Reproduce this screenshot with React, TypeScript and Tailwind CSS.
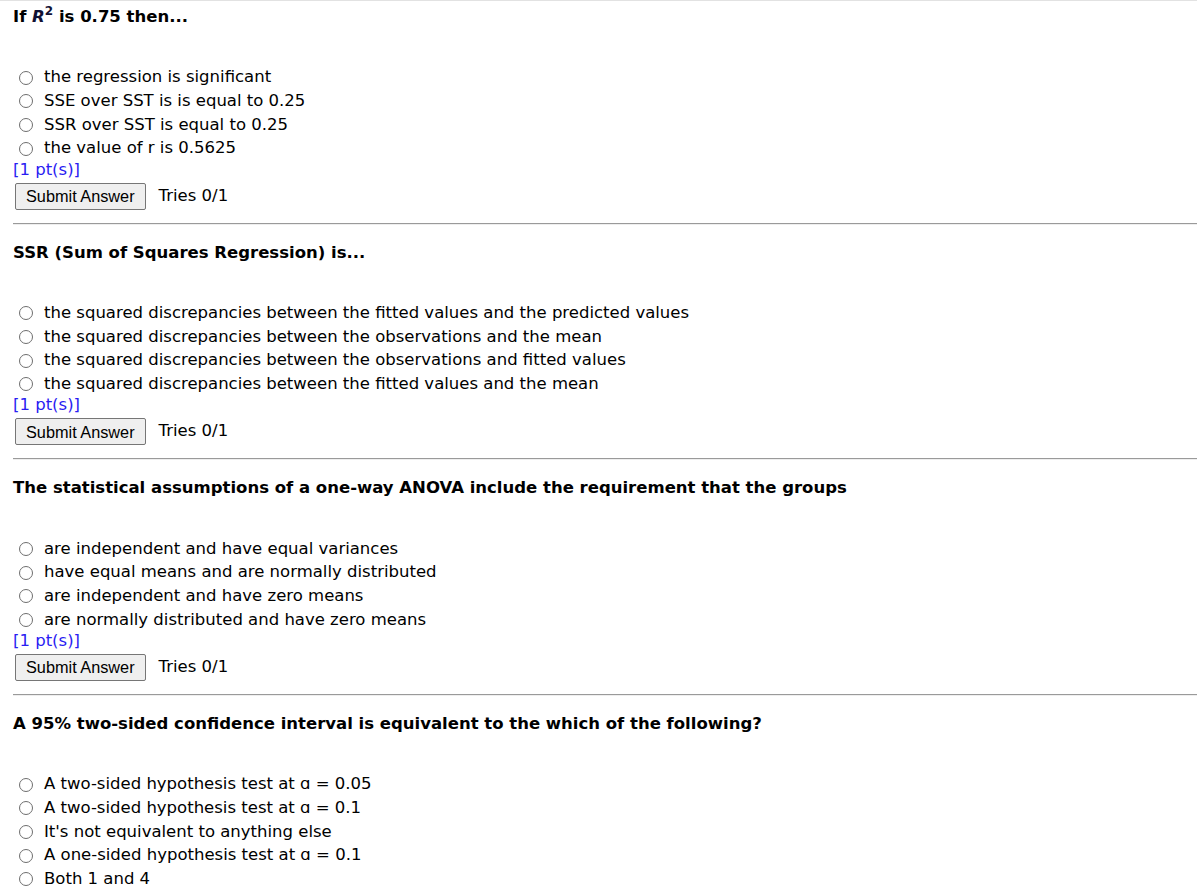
import React from "react";

type Question = {
  title: React.ReactNode;
  options: string[];
};

const questions: Question[] = [
  {
    title: (
      <>
        If{" "}
        <span className="italic text-[#111133]">
          R<sup className="not-italic text-[12px] -top-[7px]">2</sup>
        </span>{" "}
        is 0.75 then...
      </>
    ),
    options: [
      "the regression is significant",
      "SSE over SST is is equal to 0.25",
      "SSR over SST is equal to 0.25",
      "the value of r is 0.5625",
    ],
  },
  {
    title: "SSR (Sum of Squares Regression) is...",
    options: [
      "the squared discrepancies between the fitted values and the predicted values",
      "the squared discrepancies between the observations and the mean",
      "the squared discrepancies between the observations and fitted values",
      "the squared discrepancies between the fitted values and the mean",
    ],
  },
  {
    title:
      "The statistical assumptions of a one-way ANOVA include the requirement that the groups",
    options: [
      "are independent and have equal variances",
      "have equal means and are normally distributed",
      "are independent and have zero means",
      "are normally distributed and have zero means",
    ],
  },
  {
    title:
      "A 95% two-sided confidence interval is equivalent to the which of the following?",
    options: [
      "A two-sided hypothesis test at ɑ = 0.05",
      "A two-sided hypothesis test at ɑ = 0.1",
      "It's not equivalent to anything else",
      "A one-sided hypothesis test at ɑ = 0.1",
      "Both 1 and 4",
    ],
  },
];

function Radio() {
  return (
    <span className="ml-[6px] mr-[11px] inline-block w-[14px] h-[14px] shrink-0 rounded-full border border-[#6e6e6e] bg-white" />
  );
}

function QuestionBlock({ q, first, last }: { q: Question; first: boolean; last: boolean }) {
  return (
    <div>
      {!first && (
        <div className="h-[2px] border-t border-[#9a9a9a] border-b border-b-[#eeeeee]" />
      )}
      <div
        className={`${first ? "mt-[6px]" : "mt-[18px]"} h-[20px] leading-[20px] font-bold text-[16.5px] text-black`}
      >
        {q.title}
      </div>
      <div className="mt-[39px]">
        {q.options.map((o) => (
          <div key={o} className="flex items-center h-[23.67px] text-[16.5px] text-black">
            <Radio />
            <span>{o}</span>
          </div>
        ))}
      </div>
      {!last && (
        <>
          <div className="h-[18px] leading-[18px] text-[16.5px] text-[#2a1df2]">[1 pt(s)]</div>
          <div className="mt-[4px] flex items-center mb-[13px]">
            <button className="ml-[2px] h-[27px] px-[10px] bg-[#efefef] border border-[#767676] rounded-[2px] text-[16.3px] text-black font-['Liberation_Sans',Arial,sans-serif]">
              Submit Answer
            </button>
            <span className="ml-[13px] text-[16.5px] text-black">Tries 0/1</span>
          </div>
        </>
      )}
    </div>
  );
}

export default function App() {
  return (
    <div className="w-[1197px] h-[889px] overflow-hidden bg-white border-t border-[#e2e2e2] pl-[13px] font-['DejaVu_Sans',Verdana,sans-serif]">
      {questions.map((q, i) => (
        <QuestionBlock key={i} q={q} first={i === 0} last={i === questions.length - 1} />
      ))}
    </div>
  );
}
